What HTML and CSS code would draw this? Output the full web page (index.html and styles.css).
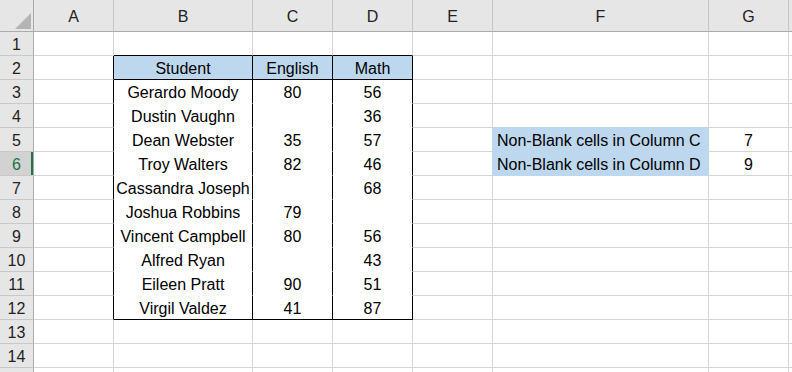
FILE: index.html
```html
<!DOCTYPE html>
<html lang="en">
<head>
  <meta charset="UTF-8" />
  <meta name="viewport" content="width=device-width, initial-scale=1.0" />
  <title>Count Non-Blank Cells</title>
  <link rel="stylesheet" href="styles.css">
</head>
<body>
  <div class="sheet" id="sheet"></div>

  <script>
    const sheet = document.getElementById("sheet");
    const letters = ["A", "B", "C", "D", "E", "F", "G", ""];
    const activeRow = 6;
    const lastRow = 15;

    // student table lives in B2:D12
    const students = [
      ["Student", "English", "Math"],
      ["Gerardo Moody", 80, 56],
      ["Dustin Vaughn", "", 36],
      ["Dean Webster", 35, 57],
      ["Troy Walters", 82, 46],
      ["Cassandra Joseph", "", 68],
      ["Joshua Robbins", 79, ""],
      ["Vincent Campbell", 80, 56],
      ["Alfred Ryan", "", 43],
      ["Eileen Pratt", 90, 51],
      ["Virgil Valdez", 41, 87]
    ];

    function countFilled(col) {
      return students.slice(1).filter(s => s[col] !== "").length;
    }

    // summary in F5:G6
    const notes = {
      5: ["Non-Blank cells in Column C", countFilled(1)],
      6: ["Non-Blank cells in Column D", countFilled(2)]
    };

    function addCell(text, classes) {
      const div = document.createElement("div");
      div.className = classes;
      div.textContent = text;
      sheet.appendChild(div);
      return div;
    }

    // header row
    const corner = addCell("", "corner");
    corner.appendChild(document.createElement("span")).className = "corner-mark";
    letters.forEach(l => addCell(l, "col-head"));

    for (let r = 1; r <= lastRow; r++) {
      // the last row only peeks in at the bottom edge, so no label
      const label = r < lastRow ? r : "";
      addCell(label, r === activeRow ? "row-head active" : "row-head");

      for (let c = 0; c < letters.length; c++) {
        let cls = "cell";
        let text = "";
        const inTable = r >= 2 && r <= 12;

        if (inTable && c >= 1 && c <= 3) {
          text = students[r - 2][c - 1];
          cls += " tbl";
          if (r === 2) cls += " tbl-head";
          if (r === 12) cls += " tbl-last";
        } else if (inTable && c === 0) {
          cls += " tbl-left";
        } else if (r === 1 && c >= 1 && c <= 3) {
          cls += " tbl-above";
        } else if (notes[r] && c === 5) {
          text = notes[r][0];
          cls += " note";
        } else if (notes[r] && c === 6) {
          text = notes[r][1];
          cls += " center";
        }

        addCell(text, cls);
      }
    }
  </script>
</body>
</html>
```

FILE: styles.css
```css
body {
  margin: 0;
  background-color: #fff;
  font-family: "Liberation Sans", Arial, sans-serif;
  font-size: 16px;
  color: #000;
  overflow: hidden;
}

.sheet {
  display: grid;
  grid-template-columns: 34px 80px 139px 80px 80px 80px 216px 80px 40px;
  grid-template-rows: 32px;
  grid-auto-rows: 24px;
}

.sheet > div {
  box-sizing: border-box;
  border-right: 1px solid #d4d4d4;
  border-bottom: 1px solid #d4d4d4;
  white-space: nowrap;
  overflow: hidden;
}

.corner {
  background-color: #e6e6e6;
  display: flex;
  justify-content: flex-end;
  align-items: flex-end;
  padding: 0 2px 2px 0;
}

.sheet > .corner {
  border-right-color: #ababab;
  border-bottom-color: #ababab;
}

.corner-mark {
  width: 0;
  height: 0;
  border-left: 16px solid transparent;
  border-bottom: 16px solid #b4b4b4;
}

.col-head {
  background-color: #e6e6e6;
  color: #222;
  text-align: center;
  line-height: 33px;
}

.sheet > .col-head {
  border-right-color: #c6c6c6;
  border-bottom-color: #ababab;
}

.row-head {
  background-color: #e6e6e6;
  color: #222;
  text-align: center;
  line-height: 21px;
  padding-top: 2px;
}

.sheet > .row-head {
  border-right-color: #ababab;
  border-bottom-color: #c8c8c8;
}

.row-head.active {
  background-color: #d2d2d2;
  color: #217346;
  box-shadow: inset -2px 0 0 #217346;
}

.cell {
  line-height: 21px;
  padding: 2px 4px 0;
}

.center {
  text-align: center;
}

.tbl {
  text-align: center;
}

.sheet > .tbl {
  padding: 2px 1px 0;
  border-right-color: #000;
  border-bottom-color: #fff;
}

.sheet > .tbl-head {
  background-color: #bdd7ee;
  border-bottom-color: #000;
}

.sheet > .tbl-last {
  border-bottom-color: #000;
}

.sheet > .tbl-left {
  border-right-color: #000;
}

.sheet > .tbl-above {
  border-bottom-color: #000;
}

.sheet > .note {
  background-color: #bdd7ee;
  border-right-color: #bdd7ee;
  border-bottom-color: #bdd7ee;
  box-shadow: -1px -1px 0 #bdd7ee;
}
```
